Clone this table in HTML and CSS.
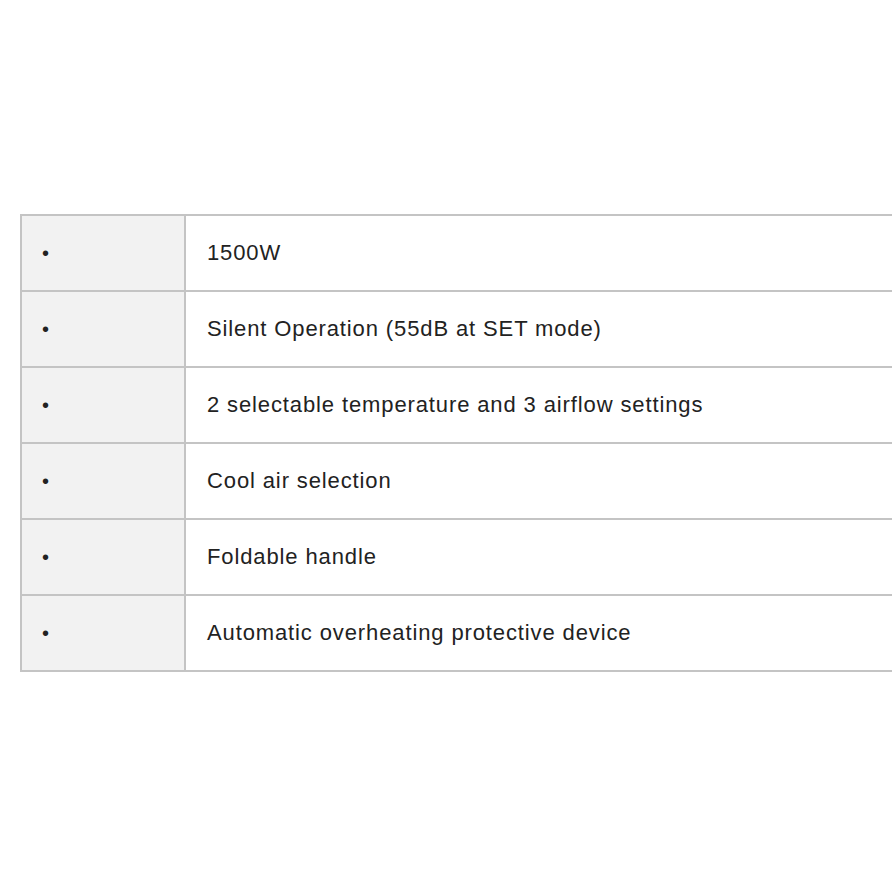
FILE: index.html
```html
<!DOCTYPE html>
<html>
<head>
<meta charset="utf-8">
<link rel="stylesheet" href="styles.css">
</head>
<body>
<div class="wrap">
<table class="spec">
<tr><td class="key">•</td><td class="val">1500W</td></tr>
<tr><td class="key">•</td><td class="val">Silent Operation (55dB at SET mode)</td></tr>
<tr><td class="key">•</td><td class="val">2 selectable temperature and 3 airflow settings</td></tr>
<tr><td class="key">•</td><td class="val">Cool air selection</td></tr>
<tr><td class="key">•</td><td class="val">Foldable handle</td></tr>
<tr><td class="key">•</td><td class="val">Automatic overheating protective device</td></tr>
</table>
</div>
</body>
</html>
```
FILE: styles.css
```css
html, body { margin: 0; padding: 0; background: #fff; }
body { font-family: "Liberation Sans", Arial, sans-serif; color: #222; overflow: hidden; width: 892px; height: 892px; }
.wrap { padding: 214px 0 0 20px; }
.spec { border-collapse: separate; border-spacing: 0; width: 920px; border-top: 2px solid #c4c4c4; border-left: 2px solid #c4c4c4; }
.spec td { padding: 0 0 0 20px; border-bottom: 2px solid #c4c4c4; border-right: 2px solid #c4c4c4; font-size: 22px; letter-spacing: 0.88px; vertical-align: middle; box-sizing: border-box; height: 76px; }
.spec .key { width: 164px; background: #f2f2f2; font-size: 20px; letter-spacing: 0; }
.spec .val { background: #fff; padding-left: 21px; }
```
